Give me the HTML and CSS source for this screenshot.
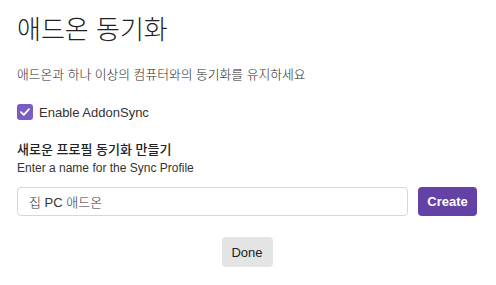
FILE: index.html
```html
<!DOCTYPE html>
<html lang="ko">
<head>
    <meta charset="UTF-8">
    <title>애드온 동기화</title>
    <link rel="stylesheet" href="styles.css">
</head>
<body>
    <div class="dialog">
        <h1 class="title">애드온 동기화</h1>
        <p class="subtitle">애드온과 하나 이상의 컴퓨터와의 동기화를 유지하세요</p>

        <label class="check-row">
            <span class="checkbox">
                <svg width="10" height="8" viewBox="0 0 10 8"><path d="M1 4.2 L3.8 6.8 L9 1.2" fill="none" stroke="#fff" stroke-width="1.8" stroke-linecap="round" stroke-linejoin="round"/></svg>
            </span>
            Enable AddonSync
        </label>

        <h2 class="section-title">새로운 프로필 동기화 만들기</h2>
        <p class="hint">Enter a name for the Sync Profile</p>

        <div class="create-row">
            <input class="name-input" type="text" value="집 PC 애드온">
            <button class="btn-create">Create</button>
        </div>

        <div class="footer">
            <button class="btn-done">Done</button>
        </div>
    </div>
</body>
</html>
```

FILE: styles.css
```css
body {
    margin: 0;
    background: #ffffff;
    color: #1e1e1e;
    font-family: "Liberation Sans", Arial, "Noto Sans CJK KR", sans-serif;
}

.dialog {
    padding: 13px 19px 0 17px;
}

.title {
    margin: 0;
    font-size: 26px;
    font-weight: 300;
    line-height: 34px;
    color: #222;
}

.subtitle {
    margin: 20px 0 0;
    font-size: 12.8px;
    font-weight: 300;
    line-height: 16px;
    color: #2a2a2a;
}

.check-row {
    display: flex;
    align-items: center;
    gap: 6px;
    margin-top: 21px;
    font-size: 13px;
    color: #333;
}

.checkbox {
    width: 16px;
    height: 16px;
    border-radius: 3px;
    background: #7b5cc4;
    display: flex;
    align-items: center;
    justify-content: center;
}

.section-title {
    margin: 21px 0 0;
    font-size: 13px;
    font-weight: 500;
    line-height: 18px;
    color: #222;
}

.hint {
    margin: 1px 0 0;
    font-size: 12px;
    line-height: 16px;
    color: #333;
}

.create-row {
    display: flex;
    gap: 10px;
    margin-top: 11px;
}

.name-input {
    flex: 1;
    height: 29px;
    box-sizing: border-box;
    border: 1px solid #d6d6da;
    border-radius: 4px;
    padding: 0 11px;
    font: 300 13px "Liberation Sans", Arial, "Noto Sans CJK KR", sans-serif;
    color: #333;
}

.btn-create {
    width: 59px;
    height: 29px;
    border: none;
    border-radius: 4px;
    background: #6441a5;
    color: #fff;
    font: bold 13px "Liberation Sans", Arial, sans-serif;
}

.footer {
    display: flex;
    justify-content: center;
    margin-top: 21px;
}

.btn-done {
    width: 51px;
    height: 30px;
    border: none;
    border-radius: 4px;
    background: #e4e4e4;
    color: #222;
    font: 13px "Liberation Sans", Arial, sans-serif;
}
```
